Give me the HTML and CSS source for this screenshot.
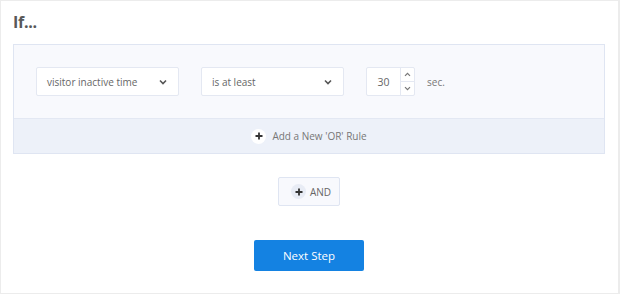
FILE: index.html
```html
<!DOCTYPE html>
<html lang="en">
<head>
    <meta charset="UTF-8">
    <meta name="viewport" content="width=device-width, initial-scale=1.0">
    <title>If... rules</title>
    <link rel="stylesheet" href="styles.css">
</head>
<body>
    <div class="frame">
        <h2 class="title">If...</h2>
        <div class="rule-box">
            <div class="rule-row">
                <div class="select wide">
                    <span>visitor inactive time</span>
                    <svg class="chev" width="8" height="6" viewBox="0 0 8 6"><path d="M1 1.5 L4 4.5 L7 1.5" fill="none" stroke="#555" stroke-width="1.6"/></svg>
                </div>
                <div class="select wide">
                    <span>is at least</span>
                    <svg class="chev" width="8" height="6" viewBox="0 0 8 6"><path d="M1 1.5 L4 4.5 L7 1.5" fill="none" stroke="#555" stroke-width="1.6"/></svg>
                </div>
                <div class="number">
                    <span class="value">30</span>
                    <div class="spin">
                        <div class="spin-btn">
                            <svg width="7" height="5" viewBox="0 0 7 5"><path d="M1 3.8 L3.5 1.3 L6 3.8" fill="none" stroke="#777" stroke-width="1.2"/></svg>
                        </div>
                        <div class="spin-btn down">
                            <svg width="7" height="5" viewBox="0 0 7 5"><path d="M1 1.2 L3.5 3.7 L6 1.2" fill="none" stroke="#777" stroke-width="1.2"/></svg>
                        </div>
                    </div>
                </div>
                <span class="unit">sec.</span>
            </div>
            <div class="or-row">
                <span class="plus white">
                    <svg width="8" height="8" viewBox="0 0 8 8"><path d="M4 0.5 V7.5 M0.5 4 H7.5" stroke="#333" stroke-width="1.8"/></svg>
                </span>
                <span>Add a New 'OR' Rule</span>
            </div>
        </div>
        <div class="and-wrap">
            <button class="and-btn">
                <span class="plus">
                    <svg width="8" height="8" viewBox="0 0 8 8"><path d="M4 0.5 V7.5 M0.5 4 H7.5" stroke="#333" stroke-width="1.8"/></svg>
                </span>
                AND
            </button>
        </div>
        <div class="next-wrap">
            <button class="next-btn">Next Step</button>
        </div>
    </div>
</body>
</html>
```

FILE: styles.css
```css
* {
    box-sizing: border-box;
}
body {
    margin: 0;
    padding: 0;
    background-color: #fff;
    font-family: "Open Sans", Arial, sans-serif;
}
.frame {
    width: 620px;
    height: 294px;
    border: 1px solid #ececec;
    border-right-width: 2px;
    padding: 0 13px 0 12px;
}
.title {
    margin: 0;
    padding-top: 10px;
    height: 43px;
    font-size: 16px;
    font-weight: 700;
    color: #585858;
    letter-spacing: -0.3px;
}
.rule-box {
    border: 1px solid #dfe5f2;
    background-color: #f8f9fd;
}
.rule-row {
    display: flex;
    align-items: center;
    gap: 22px;
    height: 73px;
    padding: 0 22px;
}
.select {
    display: flex;
    align-items: center;
    justify-content: space-between;
    width: 143px;
    height: 29px;
    padding: 0 11px 0 10px;
    background-color: #fff;
    border: 1px solid #e4e8f2;
    border-radius: 2px;
    font-size: 10px;
    color: #666;
}
.number {
    display: flex;
    width: 49px;
    height: 29px;
    background-color: #fff;
    border: 1px solid #e4e8f2;
    border-radius: 2px;
}
.value {
    flex: 1;
    display: flex;
    align-items: center;
    justify-content: center;
    font-size: 10.5px;
    color: #666;
}
.spin {
    width: 14px;
    border-left: 1px solid #e4e8f2;
    display: flex;
    flex-direction: column;
}
.spin-btn {
    flex: 1;
    display: flex;
    align-items: center;
    justify-content: center;
}
.spin-btn.down {
    border-top: 1px solid #e4e8f2;
}
.unit {
    margin-left: -10px;
    font-size: 10px;
    color: #777;
}
.or-row {
    display: flex;
    align-items: center;
    justify-content: center;
    gap: 6px;
    height: 35px;
    border-top: 1px solid #e3e8f3;
    background-color: #edf1f9;
    font-size: 10px;
    color: #777;
}
.plus {
    display: inline-flex;
    align-items: center;
    justify-content: center;
    width: 15px;
    height: 15px;
    border-radius: 50%;
    background-color: #e8ecf5;
}
.plus.white {
    background-color: #fff;
}
.and-wrap {
    display: flex;
    justify-content: center;
    margin-top: 23px;
}
.and-btn {
    display: flex;
    align-items: center;
    gap: 4px;
    width: 62px;
    height: 29px;
    padding: 0 0 0 12px;
    background-color: #f8f9fd;
    border: 1px solid #dfe5f2;
    border-radius: 2px;
    font-family: "Open Sans", Arial, sans-serif;
    font-size: 10px;
    color: #666;
}
.next-wrap {
    display: flex;
    justify-content: center;
    margin-top: 34px;
}
.next-btn {
    width: 110px;
    height: 31px;
    border: none;
    border-radius: 2px;
    background-color: #1482e2;
    color: #fff;
    font-family: "Open Sans", Arial, sans-serif;
    font-size: 11.5px;
}
```
